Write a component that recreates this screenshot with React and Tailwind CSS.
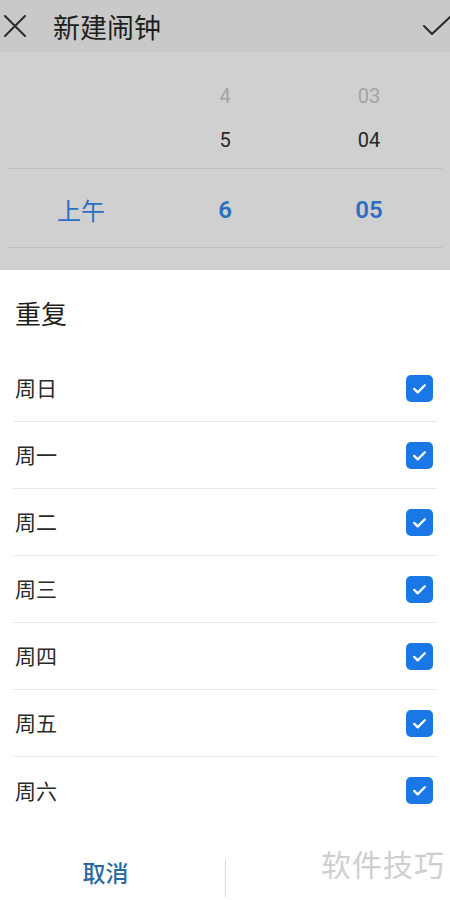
import React from "react";

const days = ["周日", "周一", "周二", "周三", "周四", "周五", "周六"];

function CheckBox() {
  return (
    <div className="w-[27px] h-[27px] rounded-[5px] bg-[#1a78e6] flex items-center justify-center">
      <svg width="17" height="17" viewBox="0 0 24 24" fill="none" stroke="#fff" strokeWidth="3.2" strokeLinecap="round" strokeLinejoin="round">
        <path d="M4.5 12.5l5 5L19.5 7.5" />
      </svg>
    </div>
  );
}

export default function App() {
  return (
    <div className="w-[450px] h-[900px] overflow-hidden bg-white font-['Noto_Sans_CJK_SC','Noto_Sans',sans-serif] text-[#222]">
      {/* top bar */}
      <header className="h-[52px] bg-[#c9c9c9] flex items-center">
        <svg width="26" height="26" viewBox="0 0 26 26" className="ml-[2px]" stroke="#2a2a2a" strokeWidth="2" strokeLinecap="round">
          <path d="M3 3l20 20M23 3L3 23" />
        </svg>
        <h1 className="ml-[25px] text-[27px] leading-none text-[#1e1e1e]">新建闹钟</h1>
        <svg width="30" height="24" viewBox="0 0 30 24" className="ml-auto mr-[-2px]" fill="none" stroke="#2a2a2a" strokeWidth="2" strokeLinecap="round" strokeLinejoin="round">
          <path d="M2 12l8 8L28 3" />
        </svg>
      </header>

      {/* time picker */}
      <div className="h-[218px] bg-[#d0d0d0] overflow-hidden pt-[22px] font-['Roboto','Noto_Sans_CJK_SC',sans-serif]">
        <div className="grid grid-cols-3 px-[9px] h-[44px] items-center text-center text-[20px] text-[#a3a3a3]">
          <span />
          <span>4</span>
          <span>03</span>
        </div>
        <div className="grid grid-cols-3 px-[9px] h-[44px] items-center text-center text-[20px] text-[#262626]">
          <span />
          <span>5</span>
          <span>04</span>
        </div>
        <div className="mx-[8px] mt-[6px] border-t border-[#bdbdbd]" />
        <div className="grid grid-cols-3 px-[9px] h-[78px] items-center text-center text-[24px] text-[#2a6fc2] font-semibold pt-[3px]">
          <span className="font-['Noto_Sans_CJK_SC',sans-serif] font-normal">上午</span>
          <span>6</span>
          <span>05</span>
        </div>
        <div className="mx-[8px] border-t border-[#bdbdbd]" />
      </div>

      {/* repeat sheet */}
      <section className="bg-white">
        <h2 className="h-[85px] flex items-center pl-[15px] text-[26px] text-[#1e1e1e]">重复</h2>
        <ul className="px-[13px]">
          {days.map((d, i) => (
            <li
              key={d}
              className={
                "h-[67px] flex items-center justify-between pl-[2px] pr-[4px] " +
                (i < days.length - 1 ? "border-b border-[#e8e8e8]" : "")
              }
            >
              <span className="text-[21px] text-[#2a2a2a]">{d}</span>
              <CheckBox />
            </li>
          ))}
        </ul>

        <div className="h-[76px] flex items-center mt-[1px]">
          <div className="w-[225px] flex justify-center pt-[19px] pr-[14px]">
            <span className="text-[23px] text-[#2b6a9c] font-medium">取消</span>
          </div>
          <div className="w-px h-[38px] bg-[#dcdcdc] mt-[30px]" />
          <div className="flex-1 flex justify-end pr-[5px]">
            <span className="text-[30px] text-[#cfcfcf] tracking-[1px]">软件技巧</span>
          </div>
        </div>
      </section>
    </div>
  );
}
